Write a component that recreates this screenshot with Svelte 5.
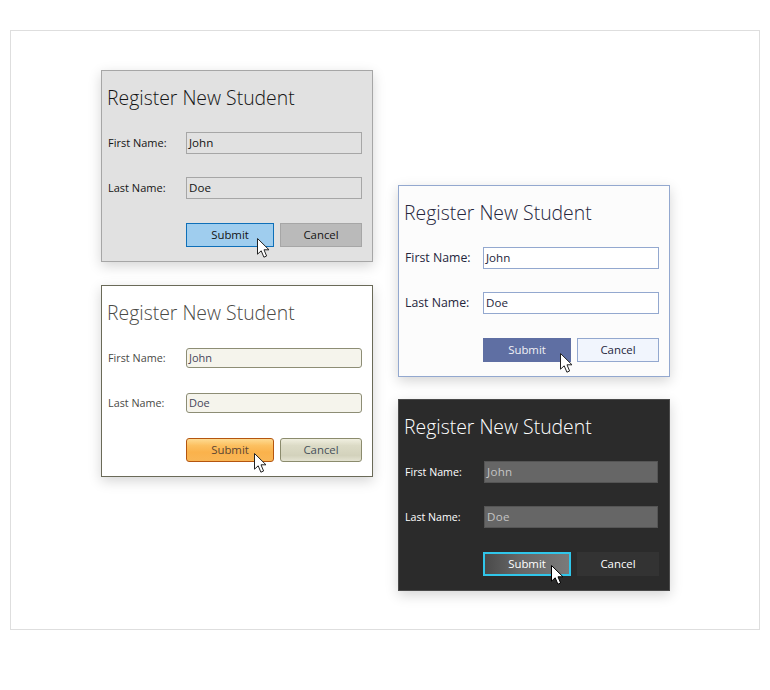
<script>
  const cards = [
    { theme: 'gray', x: 101, y: 70, cx: 70, cy: 14 },
    { theme: 'olive', x: 101, y: 285, cx: 67, cy: 14 },
    { theme: 'blue', x: 398, y: 185, cx: 76, cy: 14 },
    { theme: 'dark', x: 398, y: 399, cx: 66, cy: 11 }
  ];
</script>

<div class="page">
  <div class="frame">
    {#each cards as c}
      <section class="card {c.theme}" style="left:{c.x - 11}px;top:{c.y - 31}px">
        <h2>Register New Student</h2>
        <div class="row">
          <span class="lbl">First Name:</span>
          <div class="input">John</div>
        </div>
        <div class="row second">
          <span class="lbl">Last Name:</span>
          <div class="input">Doe</div>
        </div>
        <div class="actions">
          <div class="btn submit">
            Submit
            <svg class="cursor" style="left:{c.cx}px;top:{c.cy}px" width="14" height="21" viewBox="0 0 14 21">
              <path d="M0.5 0.5V16.2L4.2 12.8L6.9 19.2L9.6 18L7 11.8H12Z" fill="#fff" stroke="#222" stroke-width="1" stroke-linejoin="miter"/>
            </svg>
          </div>
          <div class="btn cancel">Cancel</div>
        </div>
      </section>
    {/each}
  </div>
</div>

<style>
  :global(body) {
    margin: 0;
    background: #fff;
  }
  .page {
    width: 770px;
    height: 690px;
    padding: 30px 10px 0;
    box-sizing: border-box;
    font-family: "Open Sans", "Noto Sans", sans-serif;
  }
  .frame {
    position: relative;
    width: 750px;
    height: 600px;
    box-sizing: border-box;
    border: 1px solid #dedede;
  }
  .card {
    position: absolute;
    width: 272px;
    height: 192px;
    box-sizing: border-box;
    border: 1px solid;
    padding: 0 10px 0 5px;
    box-shadow: 0 4px 12px rgba(0, 0, 0, 0.17);
  }
  h2 {
    margin: 0;
    height: 52px;
    padding-top: 12px;
    box-sizing: border-box;
    font-size: 19.4px;
    line-height: 30px;
    font-weight: 300;
    white-space: nowrap;
  }
  .row {
    display: flex;
    align-items: center;
    height: 22px;
    margin-top: 9px;
  }
  .row.second {
    margin-top: 23px;
  }
  .lbl {
    width: 79px;
    padding-left: 1px;
    box-sizing: border-box;
    font-size: 11px;
    line-height: 20px;
  }
  .input {
    width: 176px;
    height: 22px;
    box-sizing: border-box;
    border: 1px solid;
    padding-left: 2px;
    font-size: 11.6px;
    line-height: 20px;
  }
  .actions {
    display: flex;
    gap: 6px;
    margin: 24px 0 0 79px;
  }
  .btn {
    position: relative;
    height: 24px;
    box-sizing: border-box;
    border: 1px solid;
    text-align: center;
    font-size: 11.4px;
    line-height: 22px;
  }
  .submit {
    width: 88px;
  }
  .cancel {
    width: 82px;
  }
  .cursor {
    position: absolute;
  }

  .gray {
    background: #e1e1e1;
    border-color: #a6a6a6;
    color: #141414;
  }
  .gray .input {
    border-color: #a6a6a6;
  }
  .gray .submit {
    background: #9fcdee;
    border-color: #0e6fb8;
  }
  .gray .cancel {
    background: #bababa;
    border-color: #a6a6a6;
  }

  .olive {
    background: #fff;
    border-color: #6a6a58;
    color: #4a4a46;
  }
  .olive .lbl {
    font-size: 10.8px;
  }
  .olive .input {
    background: #f5f4ec;
    border-color: #8d8d75;
    border-radius: 3px;
    height: 20px;
    line-height: 17px;
    font-size: 11px;
    color: #46465a;
  }
  .olive .submit {
    background: linear-gradient(#fedb92, #fcc060 30%, #fab24c 60%, #f9b655);
    border-color: #b4550f;
    border-radius: 3px;
    color: #5c4634;
  }
  .olive .cancel {
    background: linear-gradient(#f0efe0, #dcdbc6 30%, #d3d2bc 75%, #e4e3d2);
    border-color: #8b8b6d;
    border-radius: 3px;
    color: #46505a;
  }

  .blue {
    background: #fcfcfc;
    border-color: #93a8cf;
    color: #25263c;
  }
  .blue .lbl {
    font-size: 12.3px;
  }
  .blue .input {
    background: #fff;
    border-color: #93a8cf;
  }
  .blue .submit {
    background: #5f6fa3;
    border-color: #5f6fa3;
    color: #f0f0f5;
  }
  .blue .cancel {
    background: #f1f5fd;
    border-color: #93a8cf;
  }

  .dark {
    background: #2b2b2b;
    border-color: #4a4a4a;
    color: #fff;
  }
  .dark .lbl {
    font-size: 10.65px;
  }
  .dark .input {
    background: #666;
    border-color: #555;
    color: #c4c4c4;
    width: 174px;
    margin-left: 1px;
    letter-spacing: 0.3px;
  }
  .dark .submit {
    background: linear-gradient(90deg, #4a4a4a, #666 40%, #7a7a7a);
    border: 2px solid #30c6ea;
    line-height: 20px;
  }
  .dark .cancel {
    background: #333;
    border-color: #333;
  }
  .dark .cursor path {
    stroke: #000;
  }
</style>
